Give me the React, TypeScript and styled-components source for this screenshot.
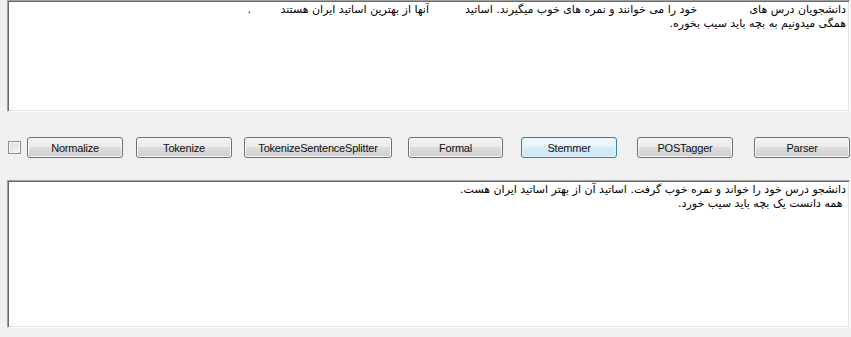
import React from 'react';
import styled, { createGlobalStyle } from 'styled-components';

const GlobalStyle = createGlobalStyle`
  html, body {
    margin: 0;
    padding: 0;
    background: #f0f0f0;
    overflow: hidden;
  }
`;

const StyledForm = styled.div`
  width: 851px;
  height: 337px;
  background: #f0f0f0;
  padding-left: 7px;
  box-sizing: border-box;
`;

const StyledTextBox = styled.div<{ height: number }>`
  width: 843px;
  height: ${({ height }) => height}px;
  box-sizing: border-box;
  background: #fff;
  border-top: 1px solid #a0a0a0;
  border-left: 1px solid #a0a0a0;
  border-right: 1px solid #fff;
  border-bottom: 1px solid #fff;
  box-shadow: inset 1px 1px 0 #696969, inset -1px -1px 0 #e3e3e3;
  padding: 2px 3px 0 0;
  direction: rtl;
  font-family: "DejaVu Sans", sans-serif;
  font-size: 11px;
  color: #000;
`;

const StyledLine = styled.div`
  display: flex;
  flex-direction: row;
  height: 14px;
  line-height: 14px;
  white-space: pre;
`;

// a run of text padded out with spaces, as typed in the text box
const StyledSegment = styled.span<{ width?: number }>`
  flex-shrink: 0;
  width: ${({ width }) => (width ? `${width}px` : 'auto')};
  overflow: hidden;
`;

const StyledToolbar = styled.div`
  display: flex;
  flex-direction: row;
  align-items: center;
  margin: 25px 0 22px 0;
  height: 21px;
`;

const StyledCheckBox = styled.span`
  width: 13px;
  height: 13px;
  margin-left: 1px;
  box-sizing: border-box;
  border: 1px solid #8e8f8f;
  background: linear-gradient(135deg, #dcdcdc 0%, #f6f6f6 100%);
  box-shadow: inset 0 0 0 1px #f4f4f4;
`;

const StyledButton = styled.button<{ offset: number; width: number; focused?: boolean }>`
  margin: 0 0 0 ${({ offset }) => offset}px;
  width: ${({ width }) => width}px;
  height: 21px;
  padding: 0;
  box-sizing: border-box;
  border: 1px solid ${({ focused }) => (focused ? '#3c7fb1' : '#707070')};
  border-radius: 3px;
  background: ${({ focused }) =>
    focused
      ? 'linear-gradient(#f0f8fd 0%, #e6f3fb 50%, #d6ecf8 50%, #cbe6f5 100%)'
      : 'linear-gradient(#f2f2f2 0%, #ebebeb 50%, #dddddd 50%, #cfcfcf 100%)'};
  box-shadow: inset 0 0 0 1px ${({ focused }) => (focused ? '#e4f3fb' : '#f8f8f8')};
  font-family: "Liberation Sans", Arial, sans-serif;
  font-size: 11px;
  color: #111;
  letter-spacing: -0.2px;
`;

const buttons = [
  { label: 'Normalize', offset: 6, width: 96 },
  { label: 'Tokenize', offset: 13, width: 96 },
  { label: 'TokenizeSentenceSplitter', offset: 12, width: 148 },
  { label: 'Formal', offset: 16, width: 95 },
  { label: 'Stemmer', offset: 18, width: 96, focused: true },
  { label: 'POSTagger', offset: 20, width: 96 },
  { label: 'Parser', offset: 21, width: 96 },
];

export default function App() {
  return (
    <StyledForm>
      <GlobalStyle />
      <StyledTextBox height={112}>
        <StyledLine>
          <StyledSegment width={149}>دانشجویان درس های</StyledSegment>
          <StyledSegment width={268}>خود را می خوانند و نمره های خوب میگیرند. اساتید</StyledSegment>
          <StyledSegment width={178}>آنها از بهترین اساتید ایران هستند</StyledSegment>
          <StyledSegment>.</StyledSegment>
        </StyledLine>
        <StyledLine>همگی میدونیم به بچه باید سیب بخوره.</StyledLine>
      </StyledTextBox>
      <StyledToolbar>
        <StyledCheckBox />
        {buttons.map((b) => (
          <StyledButton key={b.label} offset={b.offset} width={b.width} focused={b.focused}>
            {b.label}
          </StyledButton>
        ))}
      </StyledToolbar>
      <StyledTextBox height={148}>
        <StyledLine>دانشجو درس خود را خواند و نمره خوب گرفت. اساتید آن از بهتر اساتید ایران هست.</StyledLine>
        <StyledLine> همه دانست یک بچه باید سیب خورد.</StyledLine>
      </StyledTextBox>
    </StyledForm>
  );
}
